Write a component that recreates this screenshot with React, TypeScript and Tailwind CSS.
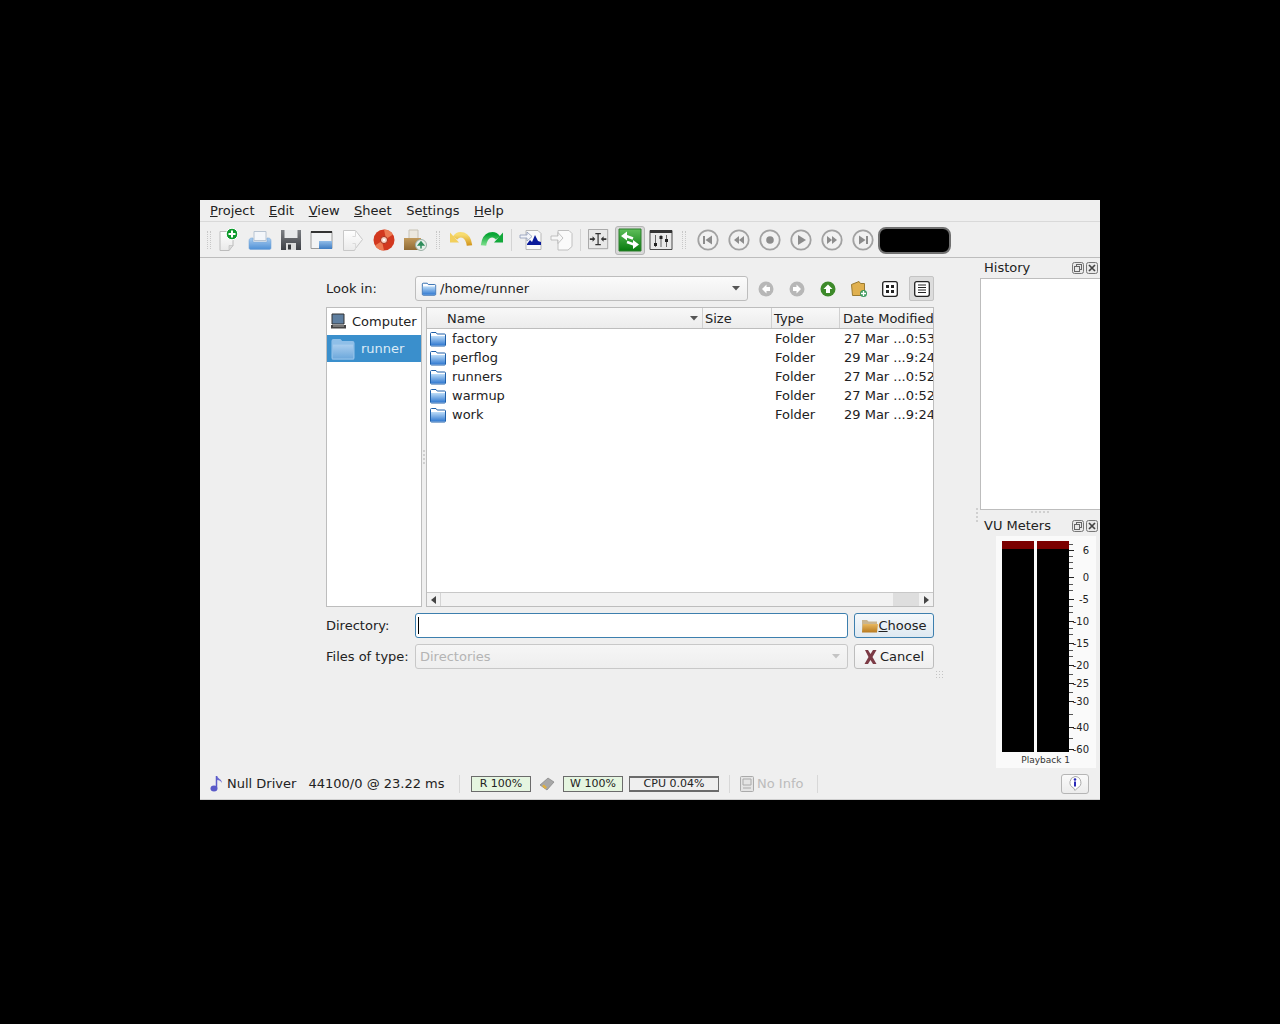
import React, { type ReactNode } from "react";
import clsx from "clsx";

const Grad = ({ id, from, to }: { id: string; from: string; to: string }) => (
  <defs>
    <linearGradient id={id} x1="0" y1="0" x2="0" y2="1">
      <stop offset="0" stopColor={from} />
      <stop offset="1" stopColor={to} />
    </linearGradient>
  </defs>
);

const Ico = ({ size = 24, children }: { size?: number; children: ReactNode }) => (
  <svg width={size} height={size} viewBox="0 0 24 24" className="block shrink-0">
    {children}
  </svg>
);

const NewIcon = () => (
  <Ico>
    <Grad id="pg" from="#ffffff" to="#e9e9e9" />
    <path d="M3 3.500h13v14l-4 5H3z" fill="url(#pg)" stroke="#bcbcbc" />
    <path d="M12 22.500l4-5h-4z" fill="#dcdcdc" stroke="#bcbcbc" strokeWidth=".6" />
    <circle cx="15" cy="6" r="5.800" fill="#0d9a2c" stroke="#fff" strokeWidth="1" />
    <path d="M15 2.500v7M11.500 6h7" stroke="#fff" strokeWidth="2" />
  </Ico>
);

const PrintIcon = () => (
  <Ico>
    <Grad id="pr" from="#a9cdf0" to="#4d8fd6" />
    <path d="M6 3.500h12v9H6z" fill="#f3f6fa" stroke="#b8c4d2" />
    <path d="M1 13c0-2 1-3 3-3h1v4h14v-4h1c2 0 3 1 3 3v7c0 1-1 1.500-2 1.500H3c-1 0-2-.5-2-1.500z" fill="url(#pr)" stroke="#7aa7d8" strokeWidth=".6" />
  </Ico>
);

const SaveIcon = () => (
  <Ico>
    <Grad id="sv" from="#7c7f84" to="#3e4045" />
    <path d="M2 2h20v20H2z" fill="url(#sv)" />
    <path d="M5.500 2h13v8h-13z" fill="#e6e8ea" />
    <path d="M7 15h10v7H7z" fill="#dcdcdc" />
    <path d="M9 16.500h3v5H9z" fill="#35373a" />
  </Ico>
);

const WindowIcon = () => (
  <Ico>
    <Grad id="wi" from="#92bde8" to="#3e7cc2" />
    <path d="M1 3.500h21v17H1z" fill="#f2f3f4" stroke="#9a9a9a" />
    <path d="M1 3h21v2H1z" fill="#333" />
    <path d="M9 13h13v8H9z" fill="url(#wi)" />
  </Ico>
);

const DocOutIcon = () => (
  <Ico>
    <Grad id="dg" from="#ffffff" to="#eaeaea" />
    <path d="M2.500 2.500h12l7 9-7 9-1 2h-11z" fill="url(#dg)" stroke="#c8c8c8" />
    <path d="M14.500 2.500v6h-3M14.500 20.500v-5h-3" fill="none" stroke="#dadada" />
  </Ico>
);

const DiscIcon = () => (
  <Ico>
    <circle cx="12" cy="12" r="10.500" fill="#d2381f" />
    <path d="M12 1.500a10.500 10.500 0 0 1 9 5L14 11zM12 22.500a10.500 10.500 0 0 1-9-5l7-4.500z" fill="#ec7a52" />
    <circle cx="12" cy="12" r="3.500" fill="#f5d3c4" stroke="#a62a16" />
    <circle cx="12" cy="12" r="1.200" fill="#fff" />
  </Ico>
);

const PackageIcon = () => (
  <Ico>
    <Grad id="pk" from="#c19a5c" to="#8f6a34" />
    <path d="M6 2h9v9H6z" fill="#ece8df" stroke="#c7c2b5" />
    <path d="M1 10h17v12H1z" fill="url(#pk)" />
    <circle cx="18" cy="17" r="5.500" fill="#e7efe9" stroke="#9cb0a6" />
    <path d="M18 20.500v-5M15.500 17l2.500-3 2.500 3z" stroke="#2d8c5a" strokeWidth="1.500" fill="#2d8c5a" />
  </Ico>
);

const UndoIcon = () => (
  <Ico>
    <Grad id="un" from="#f7dc70" to="#d2941a" />
    <path d="M6 10C10 4.500 19 5.500 20.500 17.500" fill="none" stroke="url(#un)" strokeWidth="5.500" />
    <path d="M1 4.500v10h9z" fill="#f2cf5c" />
  </Ico>
);

const RedoIcon = () => (
  <Ico>
    <Grad id="re" from="#0aa636" to="#7fe08e" />
    <path d="M18 10C14 4.500 5 5.500 3.500 17.500" fill="none" stroke="url(#re)" strokeWidth="5.500" />
    <path d="M23 4.500v10h-9z" fill="#12a83a" />
  </Ico>
);

const ImportIcon = () => (
  <Ico>
    <path d="M7 2.500h12l3 3v16H7z" fill="#fafafa" stroke="#b8b8b8" />
    <path d="M8 16l3-4 2 2 3-7 3 6 3 1v3H8z" fill="#0a1a9a" />
    <path d="M1 7h7V4l5 4.500L8 13v-3H1z" fill="#f2f4f8" stroke="#8d9bb8" strokeWidth=".8" />
  </Ico>
);

const ExportIcon = () => (
  <Ico>
    <path d="M8 2.500h11l3 3v13l-4 3.500H8z" fill="#fafafa" stroke="#c0c0c0" />
    <path d="M1 8h7V4.500l5 5.500-5 5.500V12H1z" fill="#f7f7f7" stroke="#b4b4b4" strokeWidth=".8" />
  </Ico>
);

const FitIcon = () => (
  <Ico size={22}>
    <path d="M.5.500h21v21H.5z" fill="#e8e8e8" stroke="#a0a0a0" />
    <path d="M8 5h6M8 17h6M11 5v12" stroke="#333" strokeWidth="1.300" fill="none" />
    <path d="M2 10h3V8l3 3-3 3v-2H2zM20 10h-3V8l-3 3 3 3v-2h3z" fill="#333" />
  </Ico>
);

const SwapIcon = () => (
  <Ico>
    <Grad id="sw" from="#5fbf5a" to="#067a0c" />
    <path d="M1 1h22v22H1z" fill="url(#sw)" stroke="#2f7f2f" />
    <path d="M3 8l6-4.500v9z" fill="#fff" />
    <path d="M8 8l7 2.500" stroke="#fff" strokeWidth="2.400" />
    <path d="M21 16.500l-6 4.500v-9z" fill="#fff" />
    <path d="M16 16.500l-7-2.500" stroke="#fff" strokeWidth="2.400" />
  </Ico>
);

const MixerIcon = () => (
  <Ico>
    <path d="M1 2.500h22v19H1z" fill="#e9e9e9" stroke="#4a4a4a" />
    <path d="M1 2h22v3H1z" fill="#333" />
    <path d="M6.500 7v12M12 7v12M17.500 7v12" stroke="#666" />
    <path d="M5 15h3v3H5zM10.500 8h3v3h-3zM16 11h3v3h-3z" fill="#222" />
  </Ico>
);

const Transport = ({ kind }: { kind: string }) => (
  <Ico size={24}>
    <circle cx="12" cy="12" r="9.700" fill="#f1f1f1" stroke="#a2a2a2" strokeWidth="1.800" />
    {kind === "first" && <path d="M7 8h2v8H7zM16 7.500v9L9.500 12z" fill="#8c8c8c" />}
    {kind === "rew" && <path d="M12 8v8l-5-4zM17 8v8l-5-4z" fill="#8c8c8c" />}
    {kind === "stop" && <circle cx="12" cy="12" r="3.800" fill="#8c8c8c" />}
    {kind === "play" && <path d="M9 7l8 5-8 5z" fill="#8c8c8c" />}
    {kind === "fwd" && <path d="M7 8v8l5-4zM12 8v8l5-4z" fill="#8c8c8c" />}
    {kind === "last" && <path d="M15 8h2v8h-2zM8 7.500v9l6.500-4.500z" fill="#8c8c8c" />}
  </Ico>
);

const Handle = ({ className }: { className: string }) => (
  <div className={clsx("flex shrink-0 justify-center", className)}>
    <div className="h-[18px] w-[4px] border-x border-dotted border-[#c8c8c8]" />
  </div>
);

const TbSep = ({ className }: { className: string }) => (
  <div className={clsx("flex h-[22px] shrink-0 justify-center", className)}>
    <div className="h-full w-px bg-[#d4d4d4]" />
  </div>
);

const TbBtn = ({ children, active }: { children: ReactNode; active?: boolean }) => (
  <div className="flex h-[31px] w-[31px] shrink-0 items-center justify-center">
    {active ? (
      <div className="flex h-[29px] w-[30px] items-center justify-center rounded-[3px] border border-[#b5b5b5] bg-[#d8d8d8]">
        {children}
      </div>
    ) : (
      children
    )}
  </div>
);

const Toolbar = () => (
  <div className="flex h-[36px] shrink-0 items-center border-b border-[#bdbdbd] pl-[4px] pt-[1px]">
    <Handle className="w-[9px]" />
    <TbBtn><NewIcon /></TbBtn>
    <TbBtn><PrintIcon /></TbBtn>
    <TbBtn><SaveIcon /></TbBtn>
    <TbBtn><WindowIcon /></TbBtn>
    <TbBtn><DocOutIcon /></TbBtn>
    <TbBtn><DiscIcon /></TbBtn>
    <TbBtn><PackageIcon /></TbBtn>
    <Handle className="w-[15px]" />
    <TbBtn><UndoIcon /></TbBtn>
    <TbBtn><RedoIcon /></TbBtn>
    <TbSep className="w-[8px]" />
    <TbBtn><ImportIcon /></TbBtn>
    <TbBtn><ExportIcon /></TbBtn>
    <TbSep className="w-[6px]" />
    <TbBtn><FitIcon /></TbBtn>
    <TbBtn active><SwapIcon /></TbBtn>
    <TbBtn><MixerIcon /></TbBtn>
    <Handle className="w-[16px]" />
    <TbBtn><Transport kind="first" /></TbBtn>
    <TbBtn><Transport kind="rew" /></TbBtn>
    <TbBtn><Transport kind="stop" /></TbBtn>
    <TbBtn><Transport kind="play" /></TbBtn>
    <TbBtn><Transport kind="fwd" /></TbBtn>
    <TbBtn><Transport kind="last" /></TbBtn>
    <div className="h-[27px] w-[73px] shrink-0 rounded-[8px] border-2 border-[#707070] bg-black" />
  </div>
);

const Menu = () => (
  <div className="flex h-[22px] shrink-0 items-center gap-[14.5px] border-b border-[#d9d9d9] pl-[10px]">
    <span><span className="underline">P</span>roject</span>
    <span><span className="underline">E</span>dit</span>
    <span><span className="underline">V</span>iew</span>
    <span><span className="underline">S</span>heet</span>
    <span>Se<span className="underline">t</span>tings</span>
    <span><span className="underline">H</span>elp</span>
  </div>
);

const Folder = ({ size = 18, faded }: { size?: number; faded?: boolean }) => (
  <svg width={size} height={size} viewBox="0 0 18 18" className="block shrink-0">
    <Grad id={faded ? "fldf" : "fld"} from={faded ? "#a9cdee" : "#bcdcf8"} to={faded ? "#6ea9dc" : "#2f78d0"} />
    <path d="M1.500 15V3.500c0-.6.4-1 1-1h4.500l1.200 1.500h7.300c.6 0 1 .4 1 1V15c0 .6-.4 1-1 1h-13c-.6 0-1-.4-1-1z" fill={faded ? "#8fbfe8" : "#fff"} stroke={faded ? "#8fbfe8" : "#1e5fa8"} />
    <path d="M2 6h14v9.500H2z" fill={`url(#${faded ? "fldf" : "fld"})`} />
  </svg>
);

const NavCircle = ({ dir, on }: { dir: "l" | "r" | "u"; on?: boolean }) => (
  <svg width="16" height="16" viewBox="0 0 16 16" className="block">
    <circle cx="8" cy="8" r="7.500" fill={on ? "#3d8a2a" : "#b7b7b7"} />
    {dir === "l" && <path d="M8.500 3.500L4 8l4.500 4.500V10H12V6H8.500z" fill="#fff" />}
    {dir === "r" && <path d="M7.500 3.500L12 8l-4.500 4.500V10H4V6h3.500z" fill="#fff" />}
    {dir === "u" && <path d="M8 3.500L12.500 8H10v4H6V8H3.500z" fill="#fff" />}
  </svg>
);

const DialogNav = () => (
  <div className="ml-[2px] flex items-center">
    <div className="flex w-[31px] justify-center"><NavCircle dir="l" /></div>
    <div className="flex w-[31px] justify-center"><NavCircle dir="r" /></div>
    <div className="flex w-[31px] justify-center"><NavCircle dir="u" on /></div>
    <div className="flex w-[31px] justify-center">
      <svg width="18" height="18" viewBox="0 0 18 18" className="block">
        <path d="M1.500 4.500L9 1.500l1.500 2h4v12h-12z" fill="#e0b04f" stroke="#9a7a30" />
        <circle cx="13.500" cy="13.500" r="3.500" fill="#3c9a5e" />
        <path d="M13.500 11v5M11 13.500h5" stroke="#fff" strokeWidth="1.300" />
      </svg>
    </div>
    <div className="flex w-[31px] justify-center">
      <svg width="16" height="16" viewBox="0 0 16 16" className="block">
        <rect x=".7" y=".7" width="14.600" height="14.600" rx="2" fill="#fff" stroke="#222" strokeWidth="1.300" />
        <path d="M4 4h3v3H4zM9 4h3v3H9zM4 9h3v3H4zM9 9h3v3H9z" fill="#222" />
      </svg>
    </div>
    <div className="ml-[4px] flex h-[25px] w-[25px] items-center justify-center rounded-[2px] border border-[#c4c4c4] bg-[#dcdcdc]">
      <svg width="16" height="16" viewBox="0 0 16 16" className="block">
        <rect x=".7" y=".7" width="14.600" height="14.600" rx="2" fill="#fff" stroke="#222" strokeWidth="1.300" />
        <path d="M4 4h8M4 6.500h8M4 9h8M4 11.500h8" stroke="#222" />
      </svg>
    </div>
  </div>
);

const Caret = ({ faded }: { faded?: boolean }) => (
  <svg width="8" height="5" viewBox="0 0 8 5" className="block shrink-0">
    <path d="M0 0h8L4 4.500z" fill={faded ? "#c4c4c4" : "#555"} />
  </svg>
);

const rows = [
  ["factory", "27 Mar ...0:53"],
  ["perflog", "29 Mar ...9:24"],
  ["runners", "27 Mar ...0:52"],
  ["warmup", "27 Mar ...0:52"],
  ["work", "29 Mar ...9:24"],
];

const HeadCell = ({ className, children }: { className: string; children: ReactNode }) => (
  <div className={clsx("flex h-full shrink-0 items-center border-r border-[#d0d0d0] pt-[1px]", className)}>{children}</div>
);

const FileList = () => (
  <div className="flex h-[300px] w-[508px] flex-col border border-[#bdbdbd] bg-white">
    <div className="flex h-[21px] shrink-0 items-center border-b border-[#bdbdbd] bg-gradient-to-b from-[#f8f8f8] to-[#ececec]">
      <HeadCell className="w-[276px] justify-between pl-[20px] pr-[4px]">
        Name
        <Caret />
      </HeadCell>
      <HeadCell className="w-[69px] pl-[2px]">Size</HeadCell>
      <HeadCell className="w-[68px] pl-[2px]">Type</HeadCell>
      <div className="min-w-0 flex-1 overflow-hidden whitespace-nowrap pl-[3px] pt-[1px]">Date Modified</div>
    </div>
    <div className="min-h-0 flex-1">
      {rows.map(([name, date]) => (
        <div key={name} className="flex h-[19px] items-center">
          <div className="flex w-[345px] shrink-0 items-center gap-[5px] pl-[2px]">
            <Folder />
            {name}
          </div>
          <div className="w-[69px] shrink-0 pl-[3px]">Folder</div>
          <div className="min-w-0 flex-1 overflow-hidden whitespace-nowrap pl-[3px]">{date}</div>
        </div>
      ))}
    </div>
    <div className="flex h-[14px] shrink-0 items-center border-t border-[#c8c8c8] bg-[#f2f2f2]">
      <div className="flex h-full w-[14px] items-center justify-center border-r border-[#d4d4d4]">
        <svg width="5" height="8" viewBox="0 0 5 8"><path d="M5 0v8L0 4z" fill="#444" /></svg>
      </div>
      <div className="flex-1" />
      <div className="h-full w-[26px] bg-[#dedede]" />
      <div className="flex h-full w-[14px] items-center justify-center">
        <svg width="5" height="8" viewBox="0 0 5 8"><path d="M0 0v8l5-4z" fill="#444" /></svg>
      </div>
    </div>
  </div>
);

const Sidebar = () => (
  <div className="h-[300px] w-[96px] shrink-0 border border-[#bdbdbd] bg-white">
    <div className="flex h-[27px] items-center gap-[5px] pl-[3px]">
      <svg width="17" height="17" viewBox="0 0 17 17">
        <path d="M2 1h12v10H2z" fill="#5f7fa0" stroke="#333" />
        <path d="M1 12h15v3.500H1z" fill="#444" />
        <path d="M3 13h11" stroke="#aaa" />
      </svg>
      Computer
    </div>
    <div className="flex h-[27px] items-center gap-[5px] bg-[#3a8fcc] pl-[3px] text-[#dcebf7]">
      <Folder size={26} faded />
      runner
    </div>
  </div>
);

const Dialog = () => (
  <div className="flex w-[608px] flex-col">
    <div className="flex h-[25px] items-center">
      <div className="w-[89px] shrink-0">Look in:</div>
      <div className="flex h-full w-[333px] shrink-0 items-center gap-[3px] rounded-[3px] border border-[#bdbdbd] bg-gradient-to-b from-[#fbfbfb] to-[#eeeeee] pl-[5px] pr-[7px]">
        <Folder size={16} />
        <span className="flex-1">/home/runner</span>
        <Caret />
      </div>
      <DialogNav />
    </div>
    <div className="mt-[6px] flex justify-between">
      <Sidebar />
      <div className="flex w-[4px] items-center justify-center">
        <div className="h-[14px] w-[2px] border-l-2 border-dotted border-[#d0d0d0]" />
      </div>
      <FileList />
    </div>
    <div className="mt-[6px] flex h-[25px] items-center">
      <div className="w-[89px] shrink-0">Directory:</div>
      <div className="flex h-full w-[433px] items-center rounded-[3px] border border-[#3d7fae] bg-white pl-[2px]">
        <div className="h-[17px] w-px bg-black" />
      </div>
      <div className="ml-[6px] flex h-full w-[80px] items-center justify-center gap-[1px] rounded-[3px] border border-[#3d7fae] bg-gradient-to-b from-[#f4f8fb] to-[#dfe9f1]">
        <svg width="16" height="16" viewBox="0 0 16 16">
          <defs>
            <linearGradient id="cf" x1="0" y1="0" x2="0" y2="1">
              <stop offset="0" stopColor="#e8b860" />
              <stop offset="1" stopColor="#b87a1e" />
            </linearGradient>
          </defs>
          <path d="M0 2h5l1.500 1.500H15V14H0z" fill="#c9b590" />
          <path d="M1 6h15l-1 8.500H0z" fill="url(#cf)" />
        </svg>
        <span><span className="underline">C</span>hoose</span>
      </div>
    </div>
    <div className="mt-[6px] flex h-[25px] items-center">
      <div className="w-[89px] shrink-0">Files of type:</div>
      <div className="flex h-full w-[433px] items-center justify-between rounded-[3px] border border-[#c8c8c8] bg-gradient-to-b from-[#f6f6f6] to-[#eeeeee] pl-[4px] pr-[7px] text-[#b4b4b4]">
        Directories
        <Caret faded />
      </div>
      <div className="relative ml-[6px] flex h-full w-[80px] items-center justify-center gap-[3px] rounded-[3px] border border-[#bdbdbd] bg-gradient-to-b from-[#fafafa] to-[#efefef]">
        <svg width="13" height="14" viewBox="0 0 13 14">
          <path d="M1 0h3l2.500 4L9 0h3.500L8.500 7l4 7H9L6.500 10 4 14H.5l4-7z" fill="#7c3b46" />
        </svg>
        Cancel
        <div className="absolute right-[-11px] top-[25px] h-[9px] w-[9px] bg-[radial-gradient(#c4c4c4_0.7px,transparent_0.8px)] bg-[length:3px_3px]" />
      </div>
    </div>
  </div>
);

const DockTitle = ({ title }: { title: string }) => (
  <div className="flex h-[20px] shrink-0 items-center justify-between pl-[4px] pr-[2px]">
    {title}
    <div className="flex gap-[2px]">
      <svg width="12" height="12" viewBox="0 0 12 12">
        <rect x=".5" y=".5" width="11" height="11" rx="2" fill="#e8e8e8" stroke="#777" />
        <rect x="4.500" y="2.500" width="5" height="5" fill="none" stroke="#666" />
        <rect x="2.500" y="4.500" width="5" height="5" fill="#e8e8e8" stroke="#666" />
      </svg>
      <svg width="12" height="12" viewBox="0 0 12 12">
        <rect x=".5" y=".5" width="11" height="11" rx="2" fill="#e8e8e8" stroke="#777" />
        <path d="M3 3l6 6M9 3L3 9" stroke="#444" strokeWidth="1.700" />
      </svg>
    </div>
  </div>
);

const scale = [
  ["6", 9], ["0", 36], ["-5", 58], ["-10", 80], ["-15", 102], ["-20", 124],
  ["-25", 142], ["-30", 160], ["-40", 186], ["-60", 208],
] as const;

const minorTicks = [3, 15, 21, 27, 43, 49, 65, 71, 87, 93, 109, 115, 133, 151, 173, 197];

// db scale next to the meters, drawn as a chart
const VuScale = () => (
  <svg width="28" height="216" viewBox="0 0 28 216" className="block shrink-0">
    {minorTicks.map((y) => (
      <path key={y} d={`M0 ${y + 0.5}h4`} stroke="#555" />
    ))}
    {scale.map(([label, y]) => (
      <g key={label}>
        <path d={`M0 ${y + 0.5}h5`} stroke="#222" />
        <text x="20" y={y + 3.500} textAnchor="end" fontSize="10" fill="#222" fontFamily="'DejaVu Sans', sans-serif">
          {label}
        </text>
      </g>
    ))}
  </svg>
);

const VuBar = () => (
  <div className="h-[211px] w-[32px] shrink-0 bg-black">
    <div className="h-[8px] bg-[#7b0000]" />
  </div>
);

const Dock = () => (
  <div className="relative flex w-[120px] shrink-0 flex-col">
    <DockTitle title="History" />
    <div className="h-[232px] shrink-0 border border-r-0 border-[#bdbdbd] bg-white" />
    <div className="flex h-[5px] shrink-0 justify-center">
      <div className="mt-[1px] h-[2px] w-[18px] border-t-2 border-dotted border-[#d0d0d0]" />
    </div>
    <div className="absolute left-[-4px] top-[250px] h-[14px] w-[2px] border-l-2 border-dotted border-[#d0d0d0]" />
    <div className="mt-[1px]">
      <DockTitle title="VU Meters" />
    </div>
    <div className="ml-[16px] flex min-h-0 w-[100px] flex-1 flex-col bg-[#fafafa] pt-[5px]">
      <div className="flex gap-[3px] pl-[6px]">
        <VuBar />
        <VuBar />
        <div className="-ml-[3px]">
          <VuScale />
        </div>
      </div>
      <div className="-mt-[3px] pr-[26px] text-right text-[9px] leading-[12px] text-[#333]">Playback 1</div>
    </div>
  </div>
);

const Meter = ({ className, children }: { className: string; children: ReactNode }) => (
  <div className={clsx("flex h-[16px] shrink-0 items-center justify-center pt-[1px] text-[11px]", className)}>{children}</div>
);

const StatusBar = () => (
  <div className="flex h-[32px] shrink-0 items-center border-b border-[#cfcfcf] pl-[10px]">
    <svg width="14" height="18" viewBox="0 0 14 18" className="shrink-0">
      <path d="M6.500 1v11.500" stroke="#5a5ac8" strokeWidth="1.500" />
      <path d="M7 1c1 3 5 3 5 7-1-2-3-3-5-3z" fill="#6a6ad0" />
      <ellipse cx="4" cy="13.500" rx="3.500" ry="3" fill="#5a5ac8" />
    </svg>
    <span className="ml-[3px] w-[81.500px] shrink-0">Null Driver</span>
    <span className="w-[150.500px] shrink-0">44100/0 @ 23.22 ms</span>
    <div className="mr-[11px] h-[18px] w-px bg-[#d8d8d8]" />
    <Meter className="w-[60px] border border-[#6b6b6b] bg-[#e5f5e0]">R 100%</Meter>
    <div className="flex w-[32px] shrink-0 justify-center">
      <svg width="16" height="14" viewBox="0 0 16 14">
        <path d="M1 8l8-7 6 4-7 8z" fill="#a7a7a7" stroke="#777" strokeWidth=".6" />
        <path d="M3 9l3 3 2-1.500-3-3z" fill="#e0b040" />
      </svg>
    </div>
    <Meter className="w-[60px] border border-[#6b6b6b] bg-[#e5f5e0]">W 100%</Meter>
    <Meter className="ml-[6px] w-[90px] border-x border-y-2 border-[#6b6b6b]">CPU 0.04%</Meter>
    <div className="ml-[10px] mr-[10px] h-[18px] w-px bg-[#d8d8d8]" />
    <svg width="14" height="16" viewBox="0 0 14 16" className="shrink-0">
      <rect x=".5" y=".5" width="13" height="15" rx="1" fill="#e4e4e4" stroke="#aaa" />
      <path d="M3 3h8v6H3zM3 12h8" fill="none" stroke="#aaa" />
    </svg>
    <span className="ml-[3px] w-[60px] shrink-0 text-[#bcbcbc]">No Info</span>
    <div className="h-[18px] w-px bg-[#d8d8d8]" />
    <div className="ml-auto mr-[11px] flex h-[20px] w-[28px] items-center justify-center rounded-[3px] border border-[#b5b5b5] bg-gradient-to-b from-[#fafafa] to-[#ececec]">
      <svg width="14" height="15" viewBox="0 0 14 15">
        <path d="M7 .5a6 6 0 0 1 2.500 11.400L7 14.500l-1.500-2.600A6 6 0 0 1 7 .5z" fill="#fff" stroke="#aaa" />
        <circle cx="7" cy="3.500" r="1.300" fill="#2a2ab8" />
        <path d="M6 5.500h2v5H6z" fill="#2a2ab8" />
      </svg>
    </div>
  </div>
);

export default function App() {
  return (
    <div className="h-[1024px] w-[1280px] bg-black pl-[200px] pt-[200px] font-['DejaVu_Sans',sans-serif] text-[13px] text-[#222]">
      <div className="flex h-[600px] w-[900px] flex-col bg-[#efefef]">
        <Menu />
        <Toolbar />
        <div className="flex min-h-0 flex-1">
          <div className="min-w-0 flex-1 pl-[126px] pt-[18px]">
            <Dialog />
          </div>
          <Dock />
        </div>
        <StatusBar />
      </div>
    </div>
  );
}
